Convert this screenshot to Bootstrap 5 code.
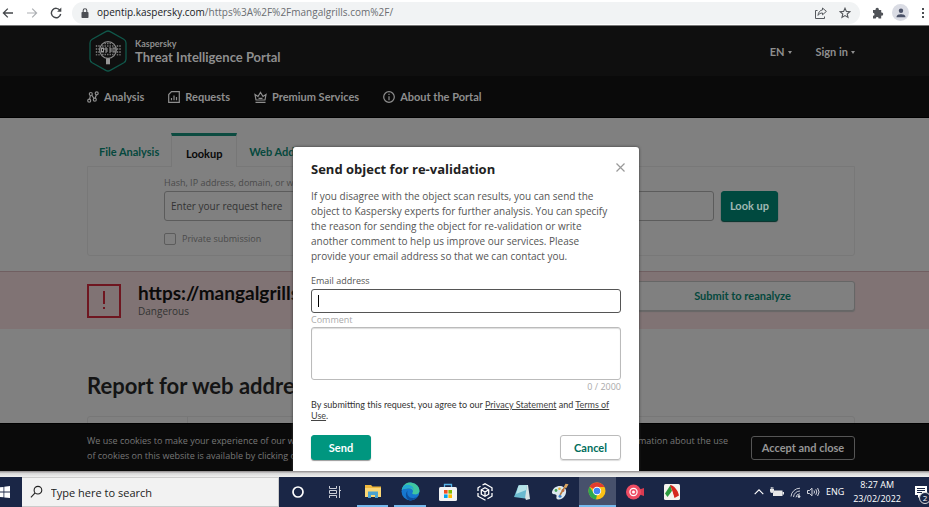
<!doctype html>
<html lang="en">
<head>
<meta charset="utf-8">
<meta name="viewport" content="width=device-width, initial-scale=1">
<title>Kaspersky Threat Intelligence Portal</title>
<link href="https://cdn.jsdelivr.net/npm/bootstrap@5.3.0/dist/css/bootstrap.min.css" rel="stylesheet">
<style>
:root{--side-l:87px;--side-r:74px}
body{font-family:"Open Sans","Noto Sans",sans-serif;font-size:10px;line-height:15px;color:#333;background:#808080}
button,input,textarea{font-family:inherit}
.btn{--bs-btn-font-size:11px;--bs-btn-line-height:14px;--bs-btn-border-radius:3px;--bs-btn-padding-y:4px;--bs-btn-padding-x:8px}
.bold-face{font-family:Lato,"Open Sans",sans-serif;font-weight:700}
.inset{padding-left:var(--side-l);padding-right:var(--side-r)}
.icon-btn{border:0;background:none;padding:0;display:flex;color:#4a4d51}
/* browser bar */
.browser-bar{height:26px;background:#fff;border-bottom:1px solid #777;padding-left:2px}
.omnibox{height:22px;background:#f1f3f4;border-radius:11px;padding:0 9px 0 9px;margin-left:10px}
.url{color:#6a6d71;font-size:10px;text-decoration:none;white-space:nowrap}
.url b{font-weight:400;color:#202124}
.avatar{width:17px;height:17px;border-radius:50%;background:#dadce4}
/* portal header */
.top-band{height:50px;background:#0f0f0f;color:#8e8e8e}
.top-band a,.menu-band a{color:#8e8e8e;text-decoration:none}
.top-band{font-size:11px}
.brand{margin-left:6px}
.brand-small{font-size:9px;line-height:12px}
.brand-big{font-size:13px;line-height:14px}
.menu-band{height:42px;background:#0a0a0a;font-size:11px;border-bottom:1px solid #000}
.menu-band .nav{gap:24px}
.menu-band a{display:flex;align-items:center;gap:5px}
.tri::after{content:"";display:inline-block;border:2px solid transparent;border-top:3px solid #8e8e8e;border-bottom:0;margin-left:3px;vertical-align:2px}
/* lookup */
.tab-row{padding-top:15px;font-size:11px}
.tab-row button{border:0;background:none;padding:4px 12px 0;height:33px;color:#05483d;font-weight:inherit}
.tab-row button.on{border:1px solid #777;border-top:3px solid #0c4b40;border-bottom:0;background:#808080;color:#080808;width:66px;height:34px;margin-bottom:-1px;z-index:1;padding:4px 0 0}
.lookup-box{border:1px solid #787878;border-radius:0 0 3px 3px;padding:8px 76px 10px 76px;height:90px;color:#4a4a4a;font-size:9px}
.query-row{gap:7px;margin:1px 0 10px}
.query{height:30px;border:1px solid #5c5c5c;border-radius:3px;background:#808080;padding:0 6px;font-size:10px;color:#333}
.query::placeholder{color:#333;opacity:1}
.btn-look{--bs-btn-bg:#00493f;--bs-btn-color:#9fb8b3;--bs-btn-border-color:#00493f;height:30px;box-shadow:0 1px 1px #002f28}
.tick-row{gap:6px}
.tick{width:12px;height:12px;appearance:none;border:1px solid #5c5c5c;border-radius:2px;margin:0}
/* verdict */
.verdict{margin-top:15px;height:58px;background:#807374;border-top:1px solid #705f61}
.verdict-mark{width:34px;height:34px;border:2px solid #6f1620;margin-right:17px}
.verdict h2{font-size:19px;line-height:22px;color:#0a0a0a}
.btn-re{--bs-btn-color:#05483d;--bs-btn-border-color:#666;--bs-btn-bg:#808080;width:225px;height:30px;margin-bottom:10px;box-shadow:0 1px 1px #666}
.report h2{font-size:22px;line-height:26px;color:#141414;margin-top:44px;margin-bottom:17px}
.report-grid{border:1px solid #777;border-radius:3px;height:40px}
.report-grid div{width:100px;border-right:1px solid #777}
/* cookies */
.cookie-bar{height:48px;background:#0a0a0a;border-top:1px solid #000;color:#777;font-size:9px}
.cookie-bar p{line-height:15px;width:641px}
.btn-ok{--bs-btn-color:#959595;--bs-btn-border-color:#555;width:104px}
/* dialog */
.veil{position:absolute;inset:0;padding:121px 0 0 3px}
.dialog-card{width:346px;border:0;border-radius:3px 3px 0 0;padding:12px 18px 11px 18px;box-shadow:0 0 3px #333;background:#fff}
.dialog-card>*{flex-shrink:0}
.dialog-card h1{font-size:13px;font-weight:700;line-height:20px;color:#222}
.close-x{margin-right:-4px}
.dialog-card .intro{color:#555;margin:10px 0}
.f-label{font-size:9px;line-height:13px;color:#555}
.first-label{padding-bottom:2px}
.f-box{border:1px solid #bbb;border-radius:3px;width:100%;display:block;padding:2px 6px;font-size:11px;resize:none;outline:0}
.mail{height:24px;border-color:#555}
.caret{position:absolute;left:7px;top:6px;width:1px;height:12px;background:#000}
.note-box{height:53px;margin-top:1px;box-shadow:inset 0 1px 1px #ddd}
.muted{color:#aaa}
.dialog-card .terms{font-family:Lato,sans-serif;font-size:9px;line-height:11px;margin:6px 0 0;color:#333}
.terms a{color:#444}
.btn-send{--bs-btn-bg:#00967f;--bs-btn-color:#fff;--bs-btn-border-color:#00967f;width:60px;height:25px;box-shadow:0 1px 1px #999}
.btn-cancel{--bs-btn-color:#006d5c;--bs-btn-border-color:#bbb;width:61px;height:25px;box-shadow:0 1px 1px #ddd}
.btn-send,.btn-cancel{--bs-btn-padding-y:3px}
/* taskbar */
.edge-strip{height:6px;background:linear-gradient(#8e8a8b,#d8d8d8 40%,#f0f0f0)}
.taskbar{height:30px;background:#1a2646;color:#fff}
.start{width:22px}
.task-search{width:257px;background:#f2f2f2;border:1px solid #ccc;border-left:0;padding:0 8px;gap:8px}
.task-search input{border:0;background:none;padding:0;font-size:11px;outline:0;width:100%;color:#222}
.task-search input::placeholder{color:#222;opacity:1}
.apps{display:grid;grid-template-columns:repeat(11,minmax(0,1fr));width:412px}
.apps button,.tray button{border:0;background:none;padding:0;display:flex;align-items:center;justify-content:center;color:#fff}
.apps .open{border-bottom:2px solid #76b9ed;margin:0 3px}
.apps .front{background:#47516c;margin:0}
.tray{gap:6px;font-size:9px;line-height:14px}
.clock{margin:0 7px 0 3px}
.count{position:absolute;left:5px;top:7px;width:12px;height:12px;border-radius:50%;background:#1a2646;border:1px solid #ddd;font-size:8px;line-height:10px;text-align:center}
</style>
</head>
<body class="vh-100 d-flex flex-column overflow-hidden">
<header class="browser-bar d-flex align-items-center flex-shrink-0">
  <button class="icon-btn" aria-label="Back"><svg width="12" height="12" viewBox="0 0 12 12" fill="none" stroke="#44474b" stroke-width="1.3"><path d="M11 6H1.5M5.8 1.6 1.4 6l4.4 4.4"/></svg></button>
  <button class="icon-btn ms-2 ps-1" aria-label="Forward"><svg width="12" height="12" viewBox="0 0 12 12" fill="none" stroke="#adb0b4" stroke-width="1.2"><path d="M1 6h9.5M6.2 1.6 10.6 6l-4.4 4.4"/></svg></button>
  <button class="icon-btn ms-2 ps-1" aria-label="Reload"><svg width="12" height="12" viewBox="0 0 12 12" fill="none" stroke="#44474b" stroke-width="1.4"><path d="M10 3.4A4.7 4.7 0 1 0 10.7 7"/><path d="M11.3.6v4.2H7.1z" fill="#44474b" stroke="none"/></svg></button>
  <div class="omnibox flex-grow-1 d-flex align-items-center">
    <svg width="8" height="10" viewBox="0 0 8 10"><rect x=".5" y="4" width="7" height="6" rx=".8" fill="#4c4f54"/><path d="M2.2 4V2.6a1.8 1.8 0 0 1 3.6 0V4" fill="none" stroke="#4c4f54" stroke-width="1.1"/></svg>
    <a class="url ms-2" href="#"><b>opentip.kaspersky.com</b>/https%3A%2F%2Fmangalgrills.com%2F/</a>
    <button class="icon-btn ms-auto me-1" aria-label="Share"><svg width="12" height="12" viewBox="0 0 12 12" fill="none" stroke="#55585d"><path d="M2.500 3.500h-2v8h9V9.500"/><path d="M7.500 1 11.400 4.400 7.500 7.800V6C5.400 6 4 6.800 3 8.400 3.300 5.300 5 3.200 7.500 2.900z"/></svg></button>
    <button class="icon-btn ms-2" aria-label="Bookmark"><svg width="12" height="12" viewBox="0 0 12 12" fill="none" stroke="#55585d" stroke-width="1.1"><path d="m6 1.200 1.400 3.200 3.500.3-2.700 2.300.8 3.400-3-1.800-3 1.800.8-3.400L1.100 4.700l3.500-.3z"/></svg></button>
  </div>
  <button class="icon-btn ms-2 ps-1" aria-label="Extensions"><svg width="12" height="12" viewBox="0 0 12 12" fill="#505358"><path d="M1 3h2.600a1.700 1.700 0 1 1 3.200 0H9.200v2.500a1.600 1.600 0 1 1 0 3.100V11.500H6.600a1.400 1.400 0 0 0-2.800 0H1V8.700a1.500 1.500 0 0 0 0-3z"/></svg></button>
  <button class="icon-btn avatar align-items-center justify-content-center ms-2 me-2" aria-label="Profile"><svg width="10" height="10" viewBox="0 0 10 10" fill="#4b5268"><circle cx="5" cy="2.700" r="2.200"/><path d="M.5 9.300C.5 6.800 3 6.200 5 6.200s4.500.6 4.500 3.100z"/></svg></button>
  <button class="icon-btn ps-1 pe-1" aria-label="Menu"><svg width="4" height="12" viewBox="0 0 4 12" fill="#4a4d51"><rect x="1" y="1" width="2" height="2"/><rect x="1" y="5" width="2" height="2"/><rect x="1" y="9" width="2" height="2"/></svg></button>
</header>

<div class="position-relative flex-grow-1 d-flex flex-column overflow-hidden">
  <div class="top-band inset d-flex align-items-center flex-shrink-0 bold-face">
    <svg width="42" height="42" viewBox="0 0 42 42" fill="none"><path d="M18.800 1.600q2.200-1.200 4.400 0L36.800 9.200q2.200 1.300 2.200 3.800v16q0 2.500-2.200 3.800L23.200 40.400q-2.200 1.200-4.400 0L5.200 32.800Q3 31.500 3 29V13q0-2.500 2.200-3.800z" stroke="#10574a" stroke-width="1.300"/><path d="M9.500 15v10.500M12 15v10.500M30.500 15v10.500M33 15v10.500" stroke="#686868" stroke-width="1.400" stroke-dasharray="2 1"/><path d="M15 16h12M15 24.500h12M17.500 13.500h7" stroke="#707070" stroke-width="1.500" stroke-dasharray="1.500 1"/><circle cx="21" cy="20" r="8.300" stroke="#8a8a8a" stroke-width="1.300"/><path d="M21 28.300v6" stroke="#969696" stroke-width="4"/><g stroke="#9a9a9a" stroke-width="1"><rect x="14.500" y="18" width="2" height="4"/><path d="M20 20h-2v-2h2v4h-2M22 18h2v4h-2M22 20h2"/><rect x="26" y="18" width="2" height="4"/></g></svg>
    <a href="#" class="brand"><span class="brand-small d-block">Kaspersky</span><span class="brand-big d-block">Threat Intelligence Portal</span></a>
    <a href="#" class="ms-auto tri">EN</a>
    <a href="#" class="ms-4 tri">Sign in</a>
  </div>
  <nav class="menu-band inset d-flex align-items-center flex-shrink-0 bold-face">
    <div class="nav">
      <a href="#"><svg width="12" height="12" viewBox="0 0 12 12" fill="none" stroke="#8e8e8e" stroke-width="1.200"><circle cx="2.200" cy="9.700" r="1.500"/><circle cx="3.800" cy="3" r="1.500"/><circle cx="7.800" cy="8.700" r="1.500"/><circle cx="9.700" cy="2.300" r="1.500"/><path d="m2.600 8.300.8-3.800M4.700 4.200 7 7.500M8.200 7.200l1.100-3.500"/></svg>Analysis</a>
      <a href="#"><svg width="12" height="12" viewBox="0 0 12 12" fill="none" stroke="#8e8e8e" stroke-width="1.200"><path d="M3.500.7h7.800v10.600H.7V3.500z"/><path d="M3.500 9.300V7M6 9.300V4.500M8.500 9.300V6"/></svg>Requests</a>
      <a href="#"><svg width="13" height="12" viewBox="0 0 13 12" fill="none" stroke="#8e8e8e" stroke-width="1.200"><path d="M2 9 1 3.500l3 2L6.500 1.500 9 5.500l3-2L11 9zM1.500 11.300h10M4.500 7.300h4"/></svg>Premium Services</a>
      <a href="#"><svg width="12" height="12" viewBox="0 0 12 12" fill="none" stroke="#8e8e8e" stroke-width="1.200"><circle cx="6" cy="6" r="5.300"/><path d="M6 5.200v4M6 2.800v1.300"/></svg>About the Portal</a>
    </div>
  </nav>
  <main class="flex-grow-1 overflow-hidden">
    <div class="inset">
      <div class="tab-row d-flex align-items-end bold-face">
        <button>File Analysis</button><button class="on">Lookup</button><button>Web Address</button>
      </div>
      <form class="lookup-box">
        <label for="q" class="d-block">Hash, IP address, domain, or web address</label>
        <div class="query-row d-flex align-items-center">
          <input id="q" class="query flex-grow-1" placeholder="Enter your request here">
          <button type="button" class="btn btn-look bold-face">Look up</button>
        </div>
        <div class="tick-row d-flex align-items-center"><input type="checkbox" class="tick" id="ps"><label for="ps">Private submission</label></div>
      </form>
    </div>
    <section class="verdict inset d-flex align-items-center">
      <svg class="verdict-mark" viewBox="0 0 30 30"><path d="M15 5v13M15 21v2" stroke="#6f1620" stroke-width="2"/></svg>
      <div><h2 class="bold-face mb-0">https://mangalgrills.com/</h2><div>Dangerous</div></div>
      <button class="btn btn-re ms-auto bold-face">Submit to reanalyze</button>
    </section>
    <section class="report inset">
      <h2 class="bold-face">Report for web address</h2>
      <div class="report-grid d-flex"><div></div></div>
    </section>
  </main>
  <footer class="cookie-bar inset d-flex align-items-center justify-content-between flex-shrink-0">
    <p class="mb-0"><span class="d-flex justify-content-between"><span>We use cookies to make your experience of our websites better.</span><span>Detailed information about the use</span></span>of cookies on this website is available by clicking on more information.</p>
    <button class="btn btn-ok bold-face text-nowrap">Accept and close</button>
  </footer>

  <div class="veil d-flex align-items-start justify-content-center">
    <form class="dialog-card h-100 d-flex flex-column" role="dialog" aria-labelledby="dlg">
      <div class="d-flex justify-content-between"><h1 id="dlg" class="mb-0">Send object for re-validation</h1>
        <button type="button" class="icon-btn close-x mt-1" aria-label="Close"><svg width="9" height="9" viewBox="0 0 9 9" stroke="#999" stroke-width="1.200"><path d="m.5.5 8 8M8.500.5l-8 8"/></svg></button></div>
      <p class="intro">If you disagree with the object scan results, you can send the<br>object to Kaspersky experts for further analysis. You can specify<br>the reason for sending the object for re-validation or write<br>another comment to help us improve our services. Please<br>provide your email address so that we can contact you.</p>
      <label for="mail" class="f-label first-label">Email address</label>
      <div class="position-relative"><input id="mail" class="f-box mail"><span class="caret"></span></div>
      <label for="note" class="f-label muted">Comment</label>
      <textarea id="note" class="f-box note-box"></textarea>
      <div class="text-end muted f-label">0 / 2000</div>
      <p class="terms">By submitting this request, you agree to our <a href="#">Privacy Statement</a> and <a href="#">Terms of Use</a>.</p>
      <div class="d-flex justify-content-between mt-auto"><button type="button" class="btn btn-send bold-face">Send</button><button type="button" class="btn btn-cancel bold-face">Cancel</button></div>
    </form>
  </div>
</div>

<div class="edge-strip flex-shrink-0"></div>
<footer class="taskbar d-flex flex-shrink-0">
  <button class="start icon-btn align-items-center" aria-label="Start"><svg width="10" height="12" viewBox="0 0 10 12" fill="#fff"><path d="M0 1.200V5.600H3.500V.9zM4.300.8V5.600H10V0zM0 6.400V10.900l3.500.4V6.400zM4.300 6.400v5L10 12V6.400z"/></svg></button>
  <label class="task-search d-flex align-items-center"><svg width="14" height="14" viewBox="0 0 14 14" fill="none" stroke="#222" stroke-width="1.200"><circle cx="8.700" cy="5" r="4.200"/><path d="M5.600 8 1 13"/></svg><input placeholder="Type here to search" aria-label="Search"></label>
  <div class="apps">
    <button aria-label="Cortana"><svg width="14" height="14" viewBox="0 0 14 14" fill="none" stroke="#fff" stroke-width="1.700"><circle cx="7" cy="7" r="5"/></svg></button>
    <button aria-label="Task view"><svg width="14" height="14" viewBox="0 0 14 14" fill="none" stroke="#c9ccd6"><path d="M1.500 1v2.500h7V1M1.500 13v-2.500h7V13M1.500 5.500h7v3h-7zM11.500 1v12M11 5.500h2"/></svg></button>
    <button class="open" aria-label="File Explorer"><svg width="18" height="16" viewBox="0 0 18 16"><path d="M1 2h6l1.500 1.500H17V14H1z" fill="#f0b93e"/><path d="M1 5h16v9H1z" fill="#fbd775"/><path d="M4 15V8.500h10V15h-3v-3H7v3z" fill="#4ba3d1"/></svg></button>
    <button class="open" aria-label="Edge"><svg width="19" height="19" viewBox="0 0 19 19"><circle cx="9.500" cy="9.500" r="9" fill="#1677cf"/><path d="M.7 8C2 2.500 6-.2 11 .8c5 1 8 5 7.400 8.700-.5 2.500-3 3.200-5.500 2.800-1.500-.3-2-1-1.200-2 .9-1.300-.4-4.200-4-4.100C4.500 6.300 1.800 7 .7 8z" fill="#40c6a0"/><path d="M.7 8C2 3.500 5 2 8.500 3c3 .9 4.500 3 4 5.200C11.500 5.800 9 5.500 6.500 6 4 6.300 2 7 .7 8z" fill="#23a7d5"/><path d="M6.800 8.500c-1.600 3 .2 7.200 4.700 7.600 2.500.2 4.500-.8 5.700-2C15 17.500 12 18.800 8.500 18.400 4.600 16.500 3.600 11.300 6.800 8.500z" fill="#0e4f9c"/></svg></button>
    <button aria-label="Store"><svg width="18" height="19" viewBox="0 0 18 19"><path d="M5.500 5V1.500h7V5" fill="none" stroke="#57b4e8" stroke-width="1.300"/><rect y="4" width="18" height="14" rx="1.500" fill="#f3f3f3"/><path d="M5 7h3.600v3.600H5z" fill="#f25022"/><path d="M9.400 7H13v3.600H9.400z" fill="#7fba00"/><path d="M5 11.400h3.600V15H5z" fill="#00a4ef"/><path d="M9.400 11.400H13V15H9.400z" fill="#ffb900"/></svg></button>
    <button aria-label="3D Viewer"><svg width="18" height="18" viewBox="0 0 18 18" fill="none" stroke="#fff" stroke-width="1.300"><path d="M6.500 2 9 .8l7 4V8M16 10v3.200l-4.500 2.600M9.500 17.200 2 13.200V10M2 8V4.800L4.500 3.300M9 4.800l3.700 2v4.400L9 13.300l-3.700-2.100V6.800zM5.300 6.800 9 9l3.700-2.200M9 9v4.300"/></svg></button>
    <button aria-label="Notepad"><svg width="18" height="18" viewBox="0 0 18 18"><path d="M6 2h9l2 14-4 1z" fill="#d7e3e4"/><path d="M5.500 2.500 14 2l-2 13.500L1 14z" fill="#69b9cf"/><path d="M5.500 2.500 14 2l-.8 5L3 11z" fill="#b5e2e8"/></svg></button>
    <button aria-label="Paint"><svg width="19" height="18" viewBox="0 0 19 18"><path d="M2 9C3 4.500 8 2 12.500 3.500c4 1.500 4.500 5.500 2.500 9-2 3.500-6 5-8 3.500-1.500-1.200.5-3-1-4.200C4.500 10.800 1.500 11.500 2 9z" fill="#dce8ef"/><circle cx="6" cy="7.500" r="1.400" fill="#48a658"/><circle cx="9.500" cy="5.700" r="1.300" fill="#e5b12c"/><circle cx="13" cy="7.500" r="1.400" fill="#d24d3d"/><circle cx="10" cy="13.300" r="1.500" fill="#3c7fca"/><path d="m10 12 5.500-9" stroke="#b5793c" stroke-width="1.500"/><path d="m14 3.800 1.500-3 3 .5-2.300 4z" fill="#d9a562"/></svg></button>
    <button class="open front" aria-label="Chrome"><svg width="18" height="18" viewBox="0 0 18 18"><circle cx="9" cy="9" r="8.500" fill="#fbc116"/><path d="M9 9 1.600 4.700A8.500 8.500 0 0 1 16.400 5H9z" fill="#e33b2e"/><path d="M1.600 4.700 5.600 11 9 13 8 17.450A8.500 8.500 0 0 1 1.600 4.700z" fill="#2da94f"/><circle cx="9" cy="9" r="4.200" fill="#fff"/><circle cx="9" cy="9" r="3.300" fill="#4285f4"/></svg></button>
    <button aria-label="Screen recorder"><svg width="20" height="16" viewBox="0 0 20 16"><path d="M13 6l6-2v8l-6-2z" fill="#d93a50"/><circle cx="8.500" cy="8" r="7.500" fill="#ee4c63"/><circle cx="8.500" cy="8" r="3.600" fill="none" stroke="#fff" stroke-width="1.200"/><circle cx="8.500" cy="8" r="1.500" fill="#fff"/></svg></button>
    <button aria-label="Tents"><svg width="16" height="16" viewBox="0 0 16 16"><rect width="16" height="16" rx="1.500" fill="#f5f3ee"/><path d="M6.500 1 1 9.500 3.500 13 8 7z" fill="#2d9b3e"/><path d="M6 1c4 .5 8 5 9 10.500L10.500 14 8 6z" fill="#d6281e"/><path d="M8 7 5.500 14.500l4.500-1z" fill="#f5f3ee"/></svg></button>
  </div>
  <div class="tray d-flex align-items-center ms-auto">
    <button aria-label="Hidden icons"><svg width="10" height="6" viewBox="0 0 10 6" fill="none" stroke="#fff" stroke-width="1.100"><path d="m.7 5.200 4.300-4.300 4.300 4.300"/></svg></button>
    <button aria-label="Battery"><svg width="14" height="10" viewBox="0 0 14 10"><path d="M4 3.500h8.500v5.500H3V6" fill="#e8e8e8"/><path d="M12.500 5h1.500v2.500h-1.500zM0 2h4v2a2 2 0 0 1-4 0zM.8 0h.9v2H.8zM2.400 0h.9v2h-.9z" fill="#e8e8e8"/></svg></button>
    <button aria-label="Wi-Fi"><svg width="11" height="11" viewBox="0 0 11 11" fill="none" stroke="#c9ccd6"><path d="M1 9.500A9 9 0 0 1 10 1.200M3.500 10A6.500 6.500 0 0 1 10 4M6 10.300A4 4 0 0 1 10 6.800"/><circle cx="9" cy="9.500" r="1" fill="#fff"/></svg></button>
    <button aria-label="Volume"><svg width="13" height="10" viewBox="0 0 13 10" fill="none" stroke="#d5d7df"><path d="M.5 3.500h2L5 1.200v7.600L2.500 6.500h-2zM7 3.500q1 1.500 0 3M8.800 2.200q2 2.800 0 5.600M10.600 1q3 4 0 8"/></svg></button>
    <span>ENG</span>
    <div class="clock text-center">8:27 AM<br>23/02/2022</div>
    <button class="position-relative" aria-label="Notifications"><svg width="15" height="14" viewBox="0 0 15 14"><path d="M1 1h12v9H7l-3 3v-3H1z" fill="#fff"/><path d="M3 3.500h8M3 5.500h8M3 7.500h5" stroke="#1a2646"/></svg><span class="count">2</span></button>
  </div>
</footer>
<script src="https://cdn.jsdelivr.net/npm/bootstrap@5.3.0/dist/js/bootstrap.bundle.min.js"></script>
</body>
</html>
